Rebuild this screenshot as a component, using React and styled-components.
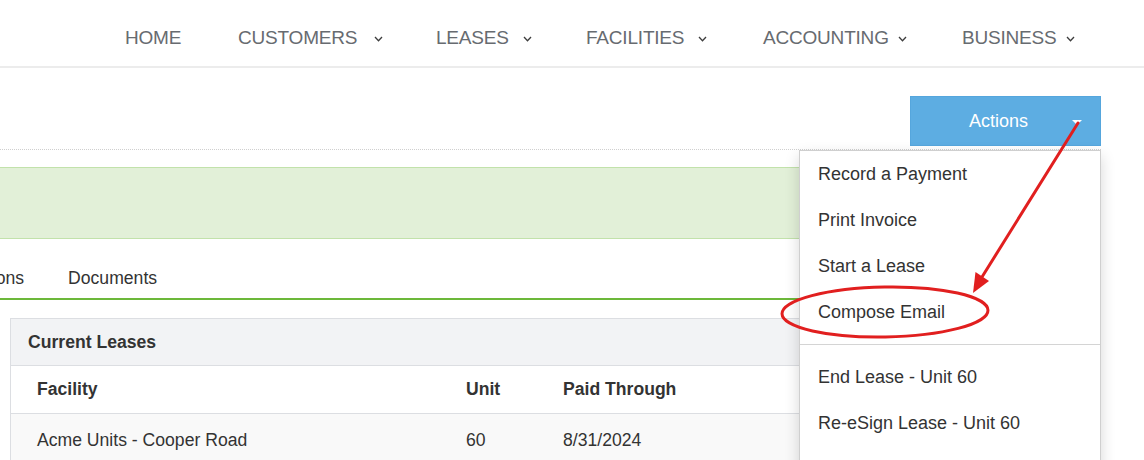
import React from "react";
import styled, { createGlobalStyle } from "styled-components";

const Global = createGlobalStyle`
  html, body { margin: 0; padding: 0; background: #fff; }
  body {
    font-family: "Liberation Sans", Arial, Helvetica, sans-serif;
    color: #333;
    overflow: hidden;
  }
`;

const Page = styled.div`
  position: relative;
  width: 1144px;
  height: 460px;
  overflow: hidden;
  background: #fff;
`;

const Header = styled.header`
  height: 66px;
  border-bottom: 2px solid #ececec;
  display: flex;
  align-items: center;
`;

const Nav = styled.nav`
  display: flex;
  align-items: center;
  padding-left: 125px;
  padding-top: 10px;
`;

const NavItem = styled.div`
  width: ${(p) => (p.$w ? `${p.$w}px` : "auto")};
  flex: none;
  display: flex;
  align-items: center;
  font-size: 19px;
  color: #676b70;
  text-transform: uppercase;
  letter-spacing: -0.2px;
  white-space: nowrap;
`;

const Chevron = styled.svg`
  margin-left: ${(p) => p.$gap || 13}px;
  width: 9px;
  height: 6px;
  margin-top: 2px;
`;

const Main = styled.main`
  padding: 28px 43px 0 0;
`;

const Toolbar = styled.div`
  display: flex;
  justify-content: flex-end;
`;

const ActionsWrap = styled.div`
  position: relative;
  z-index: 5;
`;

const ActionsButton = styled.button`
  width: 191px;
  height: 50px;
  display: flex;
  align-items: center;
  padding: 0 0 0 14px;
  margin: 0;
  border: 1px solid #55a6dd;
  background: #5dade2;
  color: #fff;
  font-family: inherit;
  font-size: 18px;
  cursor: pointer;
`;

const ButtonLabel = styled.span`
  flex: 1;
  text-align: center;
`;

const Caret = styled.span`
  width: 0;
  height: 0;
  border-left: 5px solid transparent;
  border-right: 5px solid transparent;
  border-top: 5px solid #fff;
  margin-right: 18px;
  margin-top: 2px;
`;

const Menu = styled.ul`
  position: absolute;
  top: calc(100% + 4px);
  right: 0;
  width: 302px;
  box-sizing: border-box;
  margin: 0;
  padding: 0 0 40px;
  list-style: none;
  background: #fff;
  border: 1px solid #cfcfcf;
  box-shadow: 0 6px 14px rgba(0, 0, 0, 0.16);
`;

const MenuItem = styled.li`
  height: 46px;
  display: flex;
  align-items: center;
  padding-left: 18px;
  font-size: 18px;
  color: #333;
  white-space: nowrap;
`;

const MenuDivider = styled.li`
  height: 1px;
  margin: 9px 0;
  background: #d4d4d4;
`;

const DottedRule = styled.div`
  margin-top: 3px;
  border-top: 1px dotted #cfcfcf;
`;

const Alert = styled.div`
  margin-top: 17px;
  height: 70px;
  background: #e2f0d8;
  border: 1px solid #c2e2ab;
  border-left: none;
`;

const Tabs = styled.div`
  display: flex;
  border-bottom: 2px solid #6cb83a;
  margin-left: -98px;
`;

const Tab = styled.div`
  padding: 29px 22px 10px;
  line-height: 20px;
  font-size: 17.6px;
  color: #333;
  white-space: nowrap;
`;

const Panel = styled.section`
  margin: 18px 0 0 10px;
  border: 1px solid #dcdee2;
  border-bottom: none;
`;

const PanelHeader = styled.div`
  height: 46px;
  display: flex;
  align-items: center;
  padding-left: 17px;
  background: #f2f3f5;
  border-bottom: 1px solid #dcdee2;
  font-size: 17.6px;
  font-weight: bold;
  color: #333;
`;

const Table = styled.table`
  width: 100%;
  border-collapse: collapse;
  font-size: 17.6px;
  color: #333;
`;

const Th = styled.th`
  text-align: left;
  font-weight: bold;
  height: 47px;
  padding: 0 0 0 ${(p) => (p.$first ? 26 : 0)}px;
  width: ${(p) => (p.$w ? `${p.$w}px` : "auto")};
  border-bottom: 1px solid #dcdee2;
  box-sizing: border-box;
`;

const Td = styled.td`
  height: 54px;
  padding: 0 0 0 ${(p) => (p.$first ? 26 : 0)}px;
  background: #f9f9f9;
  box-sizing: border-box;
`;

const Overlay = styled.svg`
  position: absolute;
  left: 0;
  top: 0;
  width: 1144px;
  height: 460px;
  pointer-events: none;
  z-index: 20;
`;

const navItems = [
  { label: "Home", w: 113 },
  { label: "Customers", w: 198, chev: true, gap: 17 },
  { label: "Leases", w: 150, chev: true, gap: 14 },
  { label: "Facilities", w: 177, chev: true, gap: 14 },
  { label: "Accounting", w: 199, chev: true, gap: 9 },
  { label: "Business", chev: true, gap: 9 },
];

function ChevronIcon({ gap }) {
  return (
    <Chevron $gap={gap} viewBox="0 0 9 6" fill="none">
      <polyline points="1,1 4.5,4.8 8,1" stroke="#3d3d3d" strokeWidth="1.3" />
    </Chevron>
  );
}

export default function App() {
  return (
    <Page>
      <Global />
      <Header>
        <Nav>
          {navItems.map((n) => (
            <NavItem key={n.label} $w={n.w}>
              {n.label}
              {n.chev && <ChevronIcon gap={n.gap} />}
            </NavItem>
          ))}
        </Nav>
      </Header>
      <Main>
        <Toolbar>
          <ActionsWrap>
            <ActionsButton>
              <ButtonLabel>Actions</ButtonLabel>
              <Caret />
            </ActionsButton>
            <Menu>
              <MenuItem>Record a Payment</MenuItem>
              <MenuItem>Print Invoice</MenuItem>
              <MenuItem>Start a Lease</MenuItem>
              <MenuItem>Compose Email</MenuItem>
              <MenuDivider />
              <MenuItem>End Lease - Unit 60</MenuItem>
              <MenuItem>Re-eSign Lease - Unit 60</MenuItem>
            </Menu>
          </ActionsWrap>
        </Toolbar>
        <DottedRule />
        <Alert />
        <Tabs>
          <Tab>Transactions</Tab>
          <Tab>Documents</Tab>
        </Tabs>
        <Panel>
          <PanelHeader>Current Leases</PanelHeader>
          <Table>
            <thead>
              <tr>
                <Th $first $w={455}>Facility</Th>
                <Th $w={97}>Unit</Th>
                <Th>Paid Through</Th>
              </tr>
            </thead>
            <tbody>
              <tr>
                <Td $first>Acme Units - Cooper Road</Td>
                <Td>60</Td>
                <Td>8/31/2024</Td>
              </tr>
            </tbody>
          </Table>
        </Panel>
      </Main>
      <Overlay viewBox="0 0 1144 460">
        <ellipse
          cx="885"
          cy="312"
          rx="103"
          ry="25"
          fill="none"
          stroke="#e11f1f"
          strokeWidth="3"
          transform="rotate(-1 885 312)"
        />
        <line x1="1078" y1="123" x2="982" y2="277" stroke="#e11f1f" strokeWidth="3" strokeLinecap="round" />
        <polygon points="973,293 989,281 975.5,272" fill="#e11f1f" />
      </Overlay>
    </Page>
  );
}
